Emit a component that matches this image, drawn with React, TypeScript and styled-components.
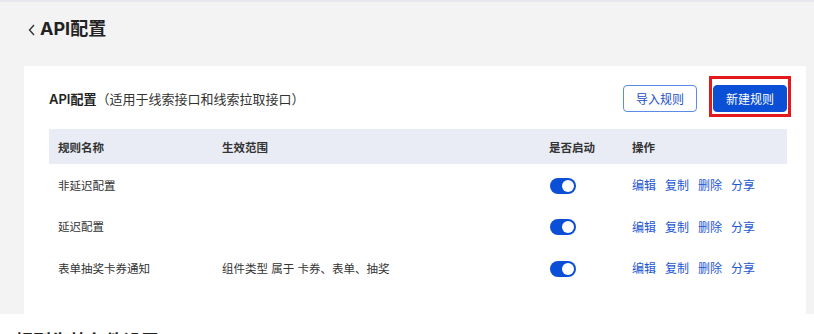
import React, { useState } from "react";
import styled, { createGlobalStyle } from "styled-components";

const GlobalStyle = createGlobalStyle`
  body {
    margin: 0;
    background: #fff;
    font-family: Inter, "Noto Sans CJK SC", sans-serif;
    color: #333;
  }
`;

interface Rule {
  name: string;
  scope: string;
  enabled: boolean;
}

const initialRules: Rule[] = [
  { name: "非延迟配置", scope: "", enabled: true },
  { name: "延迟配置", scope: "", enabled: true },
  { name: "表单抽奖卡券通知", scope: "组件类型 属于 卡券、表单、抽奖", enabled: true },
];

const actions = ["编辑", "复制", "删除", "分享"];

export default function App() {
  const [rules, setRules] = useState(initialRules);

  const toggle = (index: number) => {
    setRules((prev) =>
      prev.map((r, i) => (i === index ? { ...r, enabled: !r.enabled } : r))
    );
  };

  return (
    <>
      <GlobalStyle />
      <Main>
        <PageHeader>
          <BackIcon width="7" height="12" viewBox="0 0 7 12">
            <path d="M6 1 L1.5 6 L6 11" fill="none" stroke="#333" strokeWidth="1.4" />
          </BackIcon>
          <PageTitle>API配置</PageTitle>
        </PageHeader>
        <Card>
          <Toolbar>
            <CardTitle>
              <strong>API配置</strong>（适用于线索接口和线索拉取接口）
            </CardTitle>
            <Buttons>
              <Button>导入规则</Button>
              <Highlighted>
                <Button $primary>新建规则</Button>
              </Highlighted>
            </Buttons>
          </Toolbar>
          <Table>
            <HeadRow>
              <HeadCell>规则名称</HeadCell>
              <HeadCell>生效范围</HeadCell>
              <HeadCell>是否启动</HeadCell>
              <HeadCell>操作</HeadCell>
            </HeadRow>
            {rules.map((rule, i) => (
              <Row key={rule.name}>
                <Cell>{rule.name}</Cell>
                <Cell>{rule.scope}</Cell>
                <Cell>
                  <Switch $on={rule.enabled} onClick={() => toggle(i)} />
                </Cell>
                <Cell>
                  <Actions>
                    {actions.map((a) => (
                      <ActionLink key={a}>{a}</ActionLink>
                    ))}
                  </Actions>
                </Cell>
              </Row>
            ))}
          </Table>
        </Card>
      </Main>
      <SectionTitle>规则生效条件设置</SectionTitle>
    </>
  );
}

const Main = styled.div`
  background: #f3f3f3;
  border-top: 2px solid #e7e8ee;
  padding: 0 8px 0 24px;
`;

const PageHeader = styled.div`
  height: 64px;
  display: flex;
  align-items: flex-start;
  padding-top: 14px;
  box-sizing: border-box;
  gap: 5px;
`;

const BackIcon = styled.svg`
  margin-top: 8px;
  margin-left: 4px;
`;

const PageTitle = styled.h1`
  margin: 0;
  font-size: 18px;
  line-height: 26px;
  font-weight: 700;
  color: #222;
`;

const Card = styled.div`
  background: #fff;
  padding: 19px 19px 25px 25px;
`;

const Toolbar = styled.div`
  display: flex;
  align-items: center;
  justify-content: space-between;
  height: 27px;
  margin-bottom: 17px;
`;

const CardTitle = styled.div`
  font-size: 13px;
  color: #333;

  strong {
    font-weight: 600;
    color: #222;
  }
`;

const Buttons = styled.div`
  display: flex;
  gap: 16px;
`;

const Highlighted = styled.div`
  position: relative;

  &::after {
    content: "";
    position: absolute;
    left: -4px;
    right: -4px;
    top: -9px;
    bottom: -5px;
    border: 3px solid #e3191b;
    pointer-events: none;
  }
`;

const Button = styled.button<{ $primary?: boolean }>`
  width: 74px;
  height: 27px;
  border-radius: 4px;
  font-family: inherit;
  font-size: 12px;
  cursor: pointer;
  border: 1px solid ${(p) => (p.$primary ? "#0b4fd6" : "#5b8be6")};
  background: ${(p) => (p.$primary ? "#0b4fd6" : "#fff")};
  color: ${(p) => (p.$primary ? "#fff" : "#1a4fc4")};
`;

const Table = styled.div`
  display: flex;
  flex-direction: column;
`;

const HeadRow = styled.div`
  display: grid;
  grid-template-columns: 164px 327px 83px 1fr;
  align-items: center;
  height: 35px;
  padding-left: 9px;
  background: #e9ecf5;
`;

const HeadCell = styled.div`
  font-size: 11.5px;
  font-weight: 600;
  color: #333;
`;

const Row = styled.div`
  display: grid;
  grid-template-columns: 164px 327px 83px 1fr;
  align-items: center;
  height: 41.5px;
  padding-left: 9px;
`;

const Cell = styled.div`
  font-size: 11.5px;
  color: #333;
  display: flex;
  align-items: center;
`;

const Switch = styled.button<{ $on: boolean }>`
  position: relative;
  width: 26px;
  height: 16px;
  border: none;
  padding: 0;
  margin-left: 1px;
  margin-top: 2px;
  border-radius: 8px;
  cursor: pointer;
  background: ${(p) => (p.$on ? "#0b4fd6" : "#c9ccd4")};

  &::after {
    content: "";
    position: absolute;
    top: 2px;
    left: ${(p) => (p.$on ? "12px" : "2px")};
    width: 12px;
    height: 12px;
    border-radius: 50%;
    background: #fff;
  }
`;

const Actions = styled.div`
  display: flex;
  gap: 9px;
`;

const ActionLink = styled.a`
  font-size: 12px;
  color: #1d56d4;
  cursor: pointer;
`;

const SectionTitle = styled.h2`
  margin: 16px 0 0 15px;
  font-size: 18px;
  line-height: 24px;
  font-weight: 700;
  color: #222;
`;
